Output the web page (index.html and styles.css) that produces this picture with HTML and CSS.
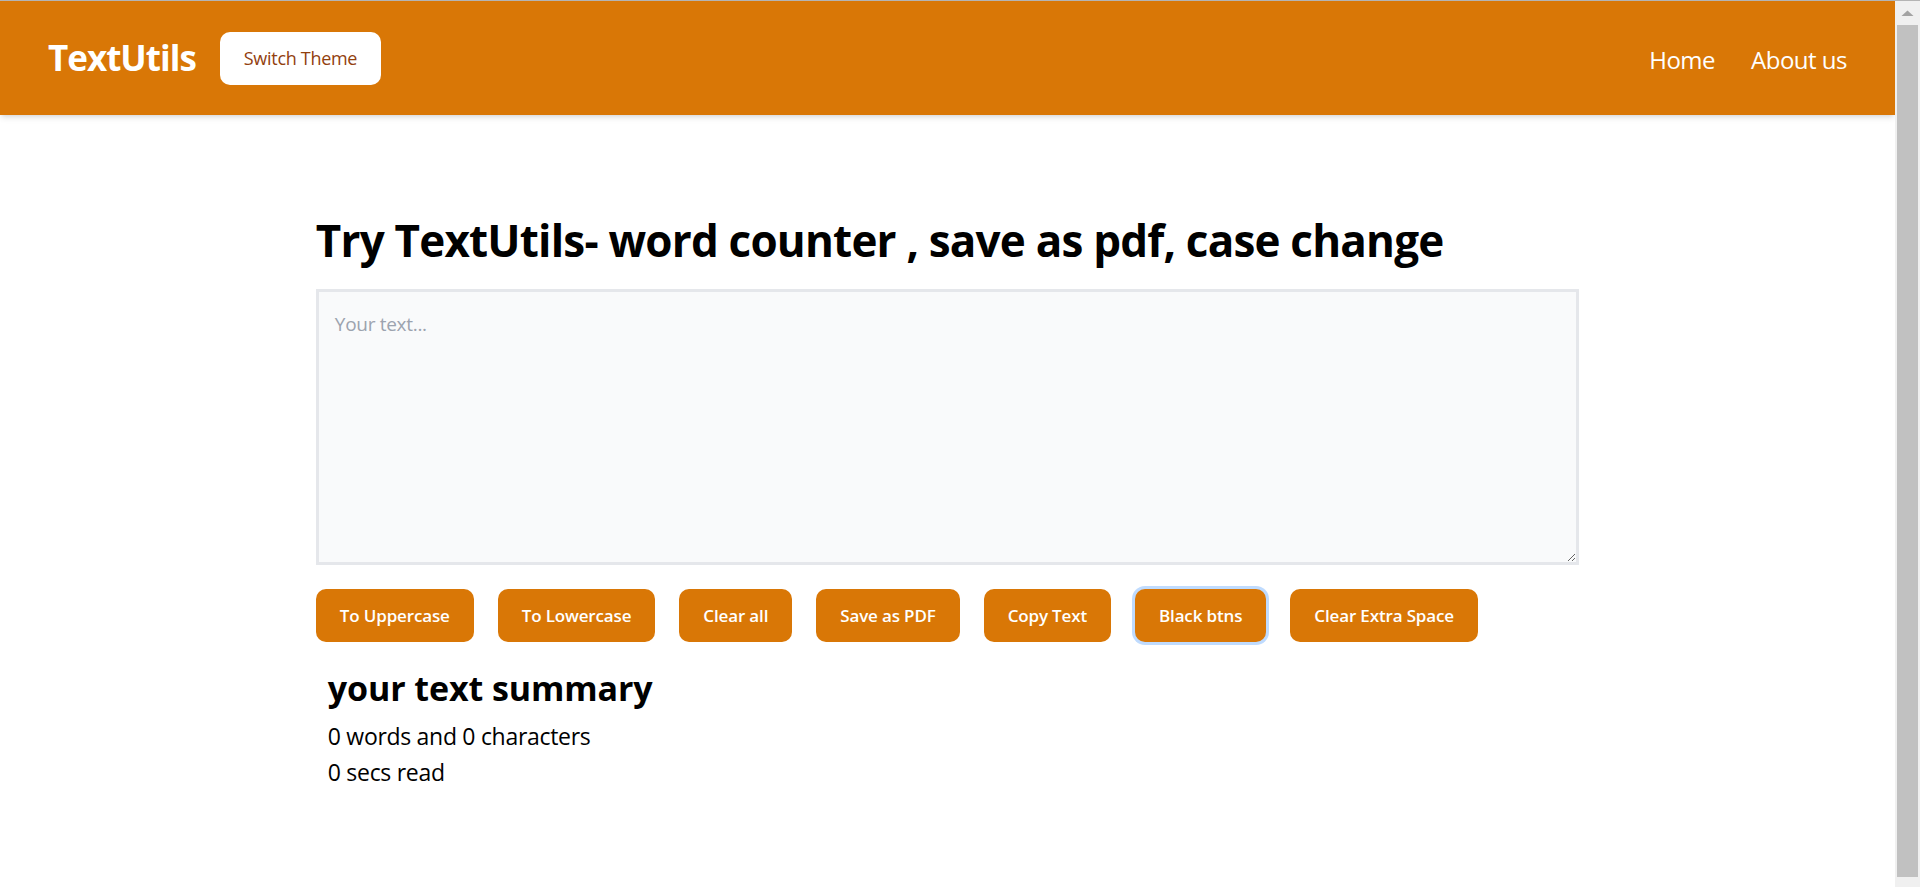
FILE: index.html
```html
<!DOCTYPE html>
<html lang="en">
<head>
<meta charset="utf-8">
<title>TextUtils</title>
<link rel="stylesheet" href="styles.css">
</head>
<body>
<div class="window">
  <div class="page">
    <header class="navbar">
      <div class="brand-group">
        <a class="brand" href="#">TextUtils</a>
        <button class="theme-btn" type="button">Switch Theme</button>
      </div>
      <nav class="nav-links">
        <a href="#">Home</a>
        <a href="#">About us</a>
      </nav>
    </header>
    <main class="container">
      <h1 class="title">Try TextUtils- word counter , save as pdf, case change</h1>
      <textarea class="editor" placeholder="Your text..."></textarea>
      <div class="actions">
        <button class="btn" type="button">To Uppercase</button>
        <button class="btn" type="button">To Lowercase</button>
        <button class="btn" type="button">Clear all</button>
        <button class="btn" type="button">Save as PDF</button>
        <button class="btn" type="button">Copy Text</button>
        <button class="btn btn-focus" type="button">Black btns</button>
        <button class="btn" type="button">Clear Extra Space</button>
      </div>
      <section class="summary">
        <h2 class="summary-title">your text summary</h2>
        <p class="summary-line">0 words and 0 characters</p>
        <p class="summary-line">0 secs read</p>
      </section>
    </main>
  </div>
  <div class="scrollbar" aria-hidden="true">
    <div class="sb-arrow">
      <svg width="25" height="24" viewBox="0 0 25 24"><path d="M6.5 15 L12.5 9.5 L18.5 15 Z" fill="#a3a3a3"/></svg>
    </div>
    <div class="sb-thumb"></div>
  </div>
</div>
</body>
</html>
```
FILE: styles.css
```css
* {
  box-sizing: border-box;
}
html,
body {
  overflow: hidden;
}
body {
  margin: 0;
  border-top: 1px solid #b4b4b4;
  font-family: "Open Sans", "Noto Sans", "Liberation Sans", sans-serif;
  color: #000;
  background: #fff;
}
.window {
  display: flex;
  height: 886px;
}
.page {
  flex: 1;
  min-width: 0;
}

/* fake browser scrollbar */
.scrollbar {
  width: 25px;
  flex: none;
  background: #f0f0f0;
  display: flex;
  flex-direction: column;
  padding-bottom: 10px;
}
.sb-arrow {
  height: 24px;
  display: flex;
  align-items: center;
  justify-content: center;
}
.sb-thumb {
  flex: 1;
  margin: 0 2px;
  background: #c1c1c1;
}

/* header */
.navbar {
  height: 114px;
  background: #d97706;
  display: flex;
  align-items: center;
  justify-content: space-between;
  padding: 0 48px;
  box-shadow: 0 4px 6px -1px rgba(0, 0, 0, 0.1), 0 2px 4px -2px rgba(0, 0, 0, 0.1);
}
.brand-group {
  display: flex;
  align-items: center;
  gap: 24px;
}
.brand {
  color: #fff;
  text-decoration: none;
  font-weight: 700;
  font-size: 35px;
  letter-spacing: -1px;
  line-height: 40px;
}
.theme-btn {
  height: 53px;
  padding: 0 24px;
  border: none;
  border-radius: 10px;
  background: #fff;
  color: #92400e;
  font-family: inherit;
  font-size: 18px;
  font-weight: 500;
  letter-spacing: -0.3px;
}
.nav-links {
  display: flex;
  gap: 36px;
  padding-top: 2px;
}
.nav-links a {
  color: #fff;
  text-decoration: none;
  font-size: 24px;
  letter-spacing: -0.5px;
}

/* main */
.container {
  width: 66.6667%;
  margin: 0 auto;
  padding-top: 97px;
}
.title {
  margin: 0;
  font-size: 44px;
  line-height: 56px;
  font-weight: 700;
  letter-spacing: -0.8px;
}
.editor {
  display: block;
  width: 100%;
  height: 276px;
  margin-top: 21px;
  border: 3px solid #e5e7eb;
  background: #f9fafb;
  padding: 19px 16px 14px;
  font-family: inherit;
  font-size: 19px;
  color: #111;
  resize: vertical;
  outline: none;
}
.editor::placeholder {
  color: #9ca3af;
  letter-spacing: -0.3px;
}
.actions {
  display: flex;
  gap: 24px;
  margin-top: 24px;
}
.btn {
  height: 53px;
  padding: 0 24px;
  border: none;
  border-radius: 10px;
  background: #d97706;
  color: #fff;
  font-family: inherit;
  font-size: 17px;
  font-weight: 600;
  letter-spacing: -0.15px;
  white-space: nowrap;
}
.btn-focus {
  box-shadow: 0 0 0 3px #bfdbfe;
}
.summary {
  padding: 0 12px;
  margin-top: 26px;
}
.summary-title {
  margin: 0;
  font-size: 34px;
  line-height: 40px;
  font-weight: 700;
  letter-spacing: -0.1px;
}
.summary-line {
  margin: 0;
  font-size: 23px;
  line-height: 36px;
  letter-spacing: -0.3px;
}
.summary-title + .summary-line {
  margin-top: 10px;
}
```
